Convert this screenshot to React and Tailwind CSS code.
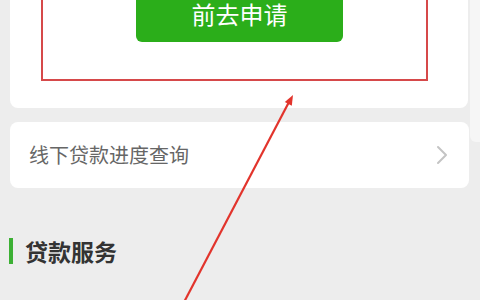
const font = { fontFamily: '"Noto Sans CJK SC", "Noto Sans", sans-serif' };

const Chevron = () => (
    <svg width="14" height="20" viewBox="0 0 14 20" fill="none">
        <path d="M3 2 L11 10 L3 18" stroke="#c4c4c4" strokeWidth="2" strokeLinecap="round" strokeLinejoin="round" />
    </svg>
);

const App = () => {
    return (
        <div className="relative w-[480px] h-[300px] overflow-hidden bg-[#ededed]" style={font}>
            <div className="flex">
                <div className="w-[470px] pl-[10px] pr-[2px]">
                    {/* apply card */}
                    <div className="-mt-[20px] bg-white rounded-b-[8px] pb-[27px]">
                        <div className="ml-[31px] w-[387px] border-2 border-[#d6494a] pt-[4px] pb-[37px]">
                            <button className="ml-[93px] w-[207px] h-[56px] rounded-[6px] bg-[#2bae1a] text-white text-[24px] leading-none flex items-center justify-center">
                                前去申请
                            </button>
                        </div>
                    </div>

                    {/* offline progress */}
                    <div className="mt-[14px] h-[66px] w-[459px] bg-white rounded-[8px] flex items-center justify-between pl-[19px] pr-[20px]">
                        <span className="text-[20px] text-[#666666]">线下贷款进度查询</span>
                        <Chevron />
                    </div>

                    {/* section title */}
                    <div className="mt-[50px] flex items-center gap-[12px] -ml-[1px]">
                        <div className="w-[4px] h-[26px] bg-[#3cb034]" />
                        <h2 className="text-[23px] font-bold text-[#333333] leading-none">贷款服务</h2>
                    </div>
                </div>
                <div className="w-[10px] h-[142px] bg-[#f6f6f6] rounded-bl-[6px]" />
            </div>

            {/* annotation arrow */}
            <svg className="absolute inset-0 pointer-events-none" width="480" height="300" viewBox="0 0 480 300">
                <line x1="182" y1="306" x2="289" y2="102" stroke="#e2342c" strokeWidth="2.2" />
                <polygon points="293,95 291.8,105.7 284.8,102" fill="#e2342c" />
            </svg>
        </div>
    );
};

export default App;
